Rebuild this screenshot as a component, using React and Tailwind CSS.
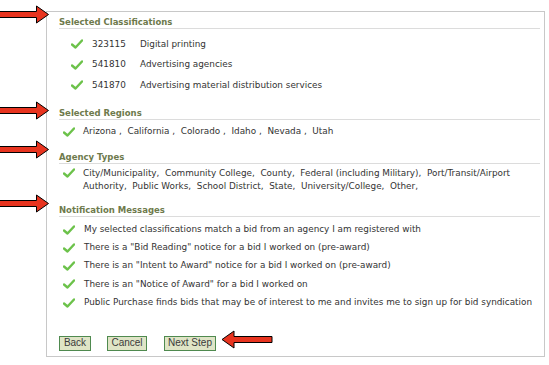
import React from "react";

const Check = ({ className = "" }) => (
  <svg width="12" height="10" viewBox="0 0 12 10" className={`shrink-0 ${className}`}>
    <path d="M1 5.5 L4.5 8.5 L11 1.5" fill="none" stroke="#6cc24a" strokeWidth="2.4" strokeLinecap="round" strokeLinejoin="round" />
  </svg>
);

const ArrowRight = ({ top }) => (
  <svg width="50" height="19" viewBox="0 0 50 19" className="absolute left-0" style={{ top }}>
    <polygon points="-1,6.5 36.5,6.5 36.5,1 48.5,9.5 36.5,18 36.5,12.5 -1,12.5" fill="#e8341f" stroke="#000" strokeWidth="1" />
  </svg>
);

const Heading = ({ children, mt }) => (
  <div className={`${mt} h-[13px] text-[8.5px] leading-[12px] font-bold text-[#6e7a4c] border-b border-[#dcdcdc]`}>{children}</div>
);

export default function App() {
  const cls = [
    ["323115", "Digital printing"],
    ["541810", "Advertising agencies"],
    ["541870", "Advertising material distribution services"],
  ];
  const notes = [
    "My selected classifications match a bid from an agency I am registered with",
    'There is a "Bid Reading" notice for a bid I worked on (pre-award)',
    'There is an "Intent to Award" notice for a bid I worked on (pre-award)',
    'There is an "Notice of Award" for a bid I worked on',
    "Public Purchase finds bids that may be of interest to me and invites me to sign up for bid syndication",
  ];
  return (
    <div className="relative w-[549px] h-[365px] bg-white overflow-hidden" style={{ fontFamily: '"DejaVu Sans", Verdana, sans-serif' }}>
      <div className="absolute left-[46px] top-[11px] w-[499px] h-[346px] border border-[#c8c8c8]" />
      <div className="ml-[47px] pt-[16px] pl-[12px] pr-[4px] w-[497px] text-[#333] text-[8.85px]">
        <Heading mt="">Selected Classifications</Heading>
        <div className="mt-[5px]">
          {cls.map(([c, d]) => (
            <div key={c} className="h-[20.5px] flex items-center">
              <Check className="ml-[12px]" />
              <span className="ml-[9px] w-[48px]">{c}</span>
              <span>{d}</span>
            </div>
          ))}
        </div>
        <Heading mt="mt-[11px]">Selected Regions</Heading>
        <div className="mt-[6px] h-[12px] flex items-center">
          <Check className="ml-[4px]" />
          <span className="ml-[8px] whitespace-pre">Arizona ,  California ,  Colorado ,  Idaho ,  Nevada ,  Utah</span>
        </div>
        <Heading mt="mt-[13px]">Agency Types</Heading>
        <div className="mt-[3px] flex items-start">
          <Check className="ml-[4px] mt-[1px]" />
          <div className="ml-[8px] leading-[13px] whitespace-pre">
            {"City/Municipality,  Community College,  County,  Federal (including Military),  Port/Transit/Airport\nAuthority,  Public Works,  School District,  State,  University/College,  Other,"}
          </div>
        </div>
        <Heading mt="mt-[11px]">Notification Messages</Heading>
        <div className="mt-[4px]">
          {notes.map((n) => (
            <div key={n} className="h-[18.25px] flex items-center">
              <Check className="ml-[4px]" />
              <span className="ml-[9px] whitespace-pre">{n}</span>
            </div>
          ))}
        </div>
        <div className="mt-[24px] flex items-center text-[10px] text-[#3a3a3a]" style={{ fontFamily: '"Liberation Sans", Arial, sans-serif' }}>
          <button className="h-[15px] w-[32px] leading-[12px] bg-[#dfe4c6] border border-[#4f8a4f]">Back</button>
          <button className="ml-[16px] h-[15px] w-[40px] leading-[12px] bg-[#dfe4c6] border border-[#4f8a4f]">Cancel</button>
          <button className="ml-[17px] h-[15px] w-[52px] leading-[12px] bg-[#dfe4c6] border border-[#4f8a4f]">Next Step</button>
        </div>
      </div>
      <ArrowRight top={5} />
      <ArrowRight top={101} />
      <ArrowRight top={140} />
      <ArrowRight top={194} />
      <svg width="52" height="19" viewBox="0 0 52 19" className="absolute left-[221px] top-[330px]">
        <polygon points="1,9.5 13,1 13,6.5 51,6.5 51,12.5 13,12.5 13,18" fill="#e8341f" stroke="#000" strokeWidth="1" />
      </svg>
    </div>
  );
}
